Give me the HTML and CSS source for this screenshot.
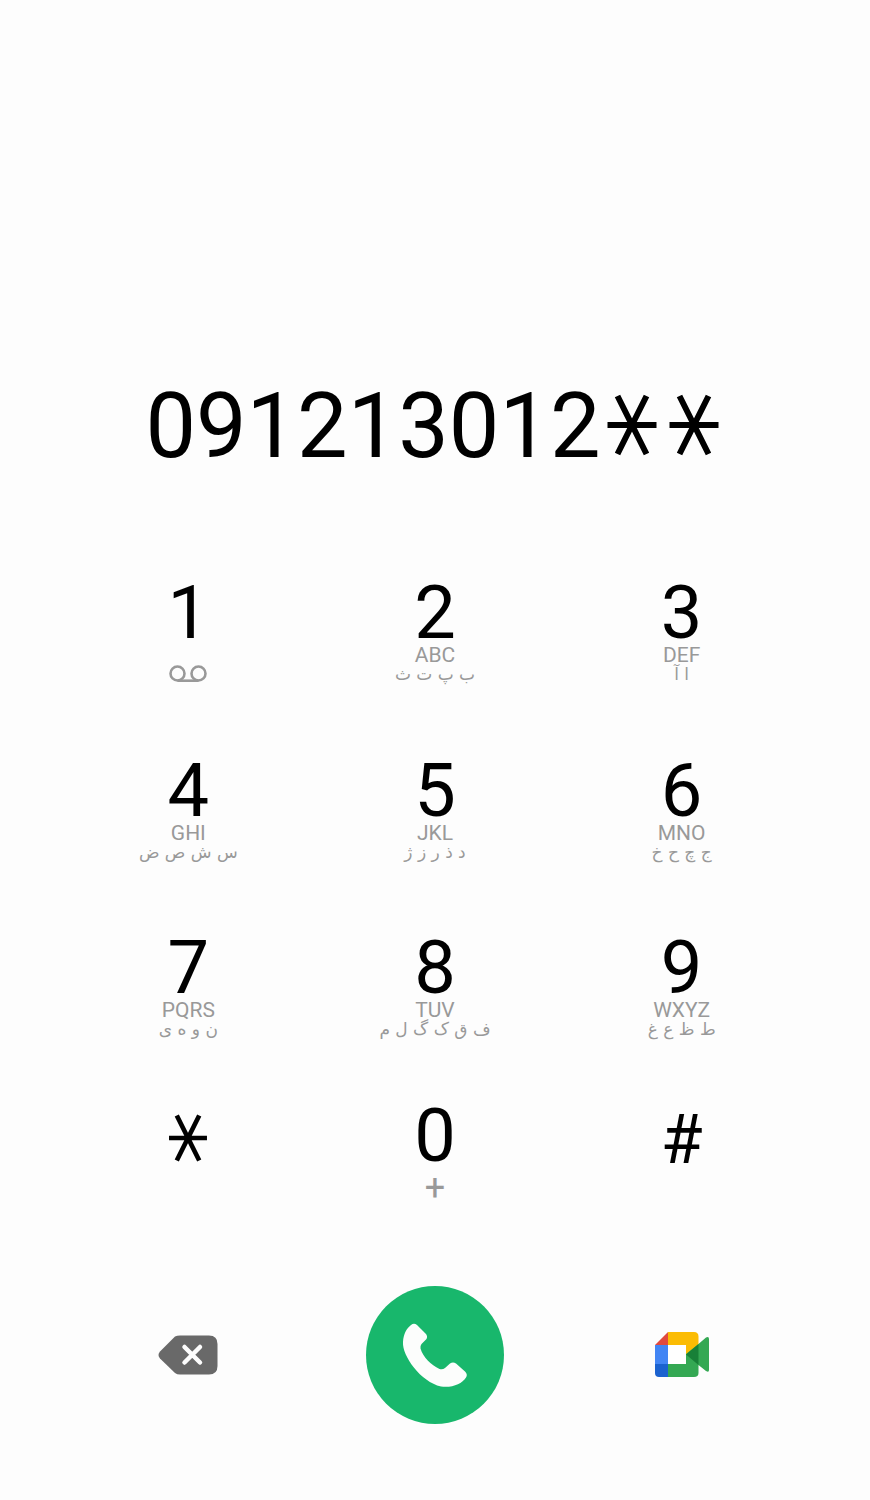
FILE: index.html
```html
<!DOCTYPE html>
<html lang="en">
<head>
<meta charset="utf-8">
<meta name="viewport" content="width=device-width, initial-scale=1">
<title>Phone</title>
<link rel="stylesheet" href="styles.css">
</head>
<body>
<svg class="defs" aria-hidden="true">
  <symbol id="star" viewBox="0 0 62 62">
    <path d="M6.500 31H55.500M16.500 2L45.500 60M45.500 2L16.500 60" stroke="currentColor" stroke-width="6" fill="none"/>
  </symbol>
</svg>
<main class="dialer">
  <output class="number" aria-label="Phone number">091213012<svg class="number-star" role="img" aria-label="*"><use href="#star"/></svg><svg class="number-star" role="img" aria-label="*"><use href="#star"/></svg></output>

  <div class="keypad">
    <button class="key" type="button"><span class="digit">1</span>
      <svg class="voicemail" viewBox="0 0 38 18" role="img" aria-label="Voicemail"><g fill="none" stroke="#999" stroke-width="2.600"><circle cx="8.500" cy="8.500" r="7"/><circle cx="29.500" cy="8.500" r="7"/><path d="M8.500 15.700H29.500"/></g></svg>
    </button>
    <button class="key" type="button"><span class="digit">2</span><span class="latin">ABC</span><span class="persian" lang="fa" dir="rtl">ب پ ت ث</span></button>
    <button class="key" type="button"><span class="digit">3</span><span class="latin">DEF</span><span class="persian" lang="fa" dir="rtl">ا آ</span></button>
    <button class="key" type="button"><span class="digit">4</span><span class="latin">GHI</span><span class="persian" lang="fa" dir="rtl">س ش ص ض</span></button>
    <button class="key" type="button"><span class="digit">5</span><span class="latin">JKL</span><span class="persian" lang="fa" dir="rtl">د ذ ر ز ژ</span></button>
    <button class="key" type="button"><span class="digit">6</span><span class="latin">MNO</span><span class="persian" lang="fa" dir="rtl">ج چ ح خ</span></button>
    <button class="key" type="button"><span class="digit">7</span><span class="latin">PQRS</span><span class="persian" lang="fa" dir="rtl">ن و ه ی</span></button>
    <button class="key" type="button"><span class="digit">8</span><span class="latin">TUV</span><span class="persian" lang="fa" dir="rtl">ف ق ک گ ل م</span></button>
    <button class="key" type="button"><span class="digit">9</span><span class="latin">WXYZ</span><span class="persian" lang="fa" dir="rtl">ط ظ ع غ</span></button>
    <button class="key" type="button" aria-label="*"><svg class="key-star"><use href="#star"/></svg></button>
    <button class="key" type="button"><span class="digit">0</span><span class="plus">+</span></button>
    <button class="key" type="button"><span class="hash">#</span></button>
  </div>

  <div class="actions">
    <button class="action" type="button" aria-label="Delete">
      <svg class="delete-icon" viewBox="0 0 60 40"><path d="M17 1.500Q19 .500 22 .500H51Q59.500 .500 59.500 9V31Q59.500 39.500 51 39.500H22Q19 39.500 17 38L2 23.500Q-1 20 2 16.500Z" fill="#696969"/><path d="M26.500 12L42 27.500M42 12L26.500 27.500" stroke="#fdfdfd" stroke-width="4.500" stroke-linecap="round"/></svg>
    </button>
    <button class="action call" type="button" aria-label="Call">
      <svg class="call-icon" viewBox="11 11 138 138"><path d="M56 50Q59 47.500 62 50L70.500 58.500Q73 61 71.500 64L66.500 69Q65 71 65.500 73.500C68 82 76 90 84.500 94Q87.500 95 90 93L95 88.500Q98 86.500 101 88.500L110 96.500Q113 99.500 111 102.500C107 109 97 113 86 111.500C66 107 47 81 48 67C48.500 59 51.500 53.500 56 50Z" fill="#fcfdfc"/></svg>
    </button>
    <button class="action" type="button" aria-label="Video call with Meet">
      <svg class="meet-icon" viewBox="0 0 54 46"><path d="M13 0H39Q43.500 0 43.500 4.500V14L31 22.500V13H13Z" fill="#fbbc04"/><path d="M13 0V13H0Z" fill="#e04a3f"/><path d="M0 13H13V32H0Z" fill="#4285f4"/><path d="M0 32H13V45H4Q0 45 0 41Z" fill="#1b62cf"/><path d="M13 32H31V22L43.500 12L51 5.500Q54 4 54 7V38Q54 41 51 39L43.500 33V41Q43.500 45 39 45H13Z" fill="#34a853"/><path d="M31 22.500L43.500 12V33Z" fill="#188038"/><path d="M13 13H31V32H13Z" fill="#fff"/></svg>
    </button>
  </div>
</main>
</body>
</html>
```
FILE: styles.css
```css
* {
  box-sizing: border-box;
}

body {
  margin: 0;
  background: #fdfdfd;
  color: #000;
  font-family: Roboto, "Noto Sans", sans-serif;
}

button {
  border: 0;
  padding: 0;
  background: none;
  color: inherit;
  font: inherit;
  cursor: pointer;
}

svg {
  display: block;
}

.defs {
  position: absolute;
  width: 0;
  height: 0;
}

.dialer {
  min-height: 100vh;
  padding: 377px 65px 75px;
}

.number {
  display: flex;
  align-items: center;
  justify-content: center;
  font-size: 90px;
  line-height: 100px;
}

.number-star {
  width: 62px;
  height: 62px;
  margin-bottom: 4px;
}

.keypad {
  display: grid;
  grid-template-columns: repeat(3, 1fr);
  grid-template-rows: 178px 177px 168px auto;
  margin-top: 104px;
}

.key {
  display: flex;
  flex-direction: column;
  align-items: center;
  align-self: start;
}

.digit {
  font-size: 74px;
  line-height: 64px;
}

.latin {
  color: #999;
  font-size: 21px;
  line-height: 20px;
}

.persian {
  color: #999;
  font-family: "DejaVu Sans", sans-serif;
  font-size: 17px;
  line-height: 18px;
}

.voicemail {
  width: 38px;
  height: 18px;
  margin-top: 20px;
}

.key-star {
  width: 48px;
  height: 48px;
  margin-top: 10px;
}

.plus {
  color: #999;
  font-size: 36px;
  line-height: 40px;
}

.hash {
  margin-top: 4px;
  font-size: 68px;
  line-height: 64px;
}

.actions {
  display: grid;
  grid-template-columns: repeat(3, 1fr);
  align-items: center;
  justify-items: center;
  margin-top: 78px;
}

.call {
  width: 138px;
  height: 138px;
  border-radius: 50%;
  background: #18b76c;
  display: grid;
  place-items: center;
}

.call-icon {
  width: 138px;
  height: 138px;
}

.delete-icon {
  width: 60px;
  height: 40px;
}

.meet-icon {
  width: 54px;
  height: 46px;
}
```
